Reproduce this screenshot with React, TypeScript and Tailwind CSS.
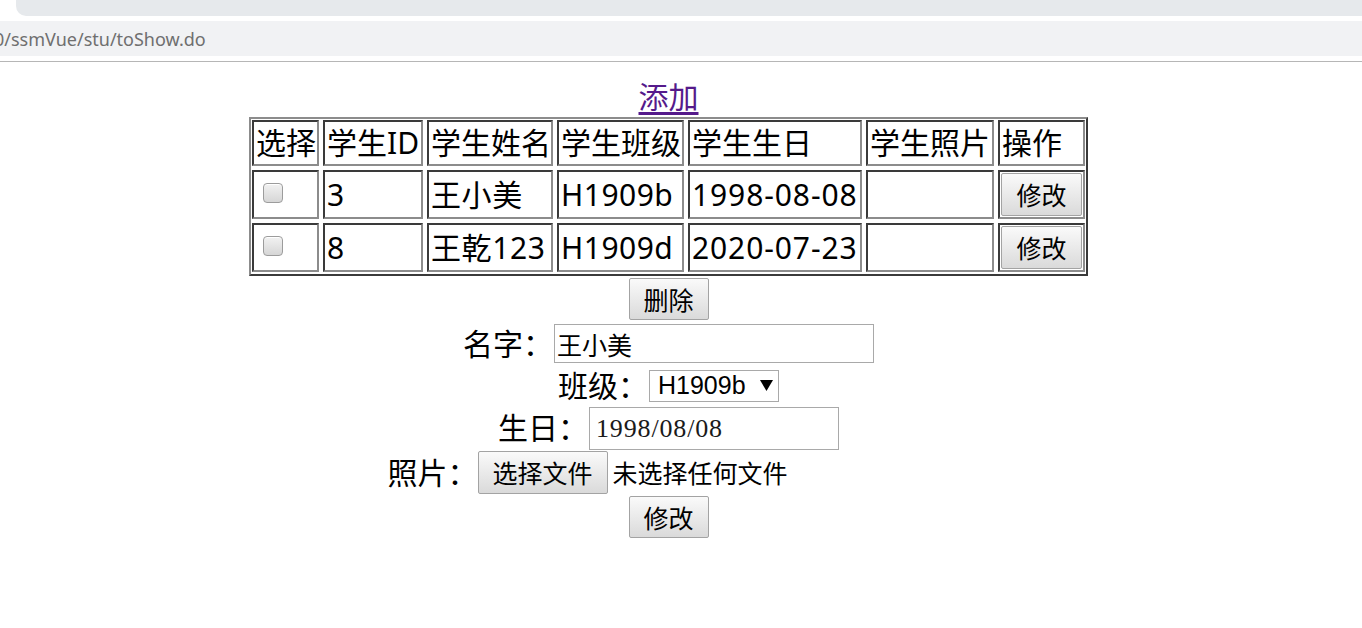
import React from "react";

const W = ["w-[63px]", "w-[96px]", "w-[122px]", "w-[123px]", "w-[170px]", "w-[124px]", "w-[83px]"];
const TD =
  "p-0 border-2 border-t-[#3a3a3a] border-l-[#3a3a3a] border-r-[#8c8c8c] border-b-[#8c8c8c] align-middle";

function Btn({ children, className = "" }: { children: React.ReactNode; className?: string }) {
  return (
    <button
      type="button"
      className={
        "flex items-center justify-center border border-[#a3a3a3] rounded-[2px] bg-linear-to-b from-[#fafafa] to-[#dadada] text-[25px] text-black leading-none pt-[2px] " +
        className
      }
    >
      {children}
    </button>
  );
}

function Check() {
  return (
    <input
      type="checkbox"
      className="appearance-none w-[20px] h-[20px] rounded-[4px] border border-[#9c9c9c] bg-linear-to-b from-[#f2f2f2] to-[#d6d6d6] shadow-[inset_0_1px_0_#ffffff] block"
    />
  );
}

const header = ["选择", "学生ID", "学生姓名", "学生班级", "学生生日", "学生照片", "操作"];
const rows = [
  { id: "3", name: "王小美", cls: "H1909b", bd: "1998-08-08" },
  { id: "8", name: "王乾123", cls: "H1909d", bd: "2020-07-23" },
];

export default function App() {
  return (
    <div className="w-[1362px] h-[628px] bg-white overflow-hidden font-['Noto_Sans','Noto_Sans_CJK_SC',sans-serif] text-black">
      {/* browser chrome */}
      <div className="h-[16px] flex">
        <div className="w-[16px] bg-white" />
        <div className="flex-1 bg-[#e6e9ec] rounded-bl-[10px]" />
      </div>
      <div className="h-[5px] bg-white" />
      <div className="h-[35px] bg-[#f1f2f4] flex items-center overflow-hidden">
        <span className="ml-[-6px] text-[18px] leading-[24px] text-[#6f6f6f] whitespace-nowrap">
          0/ssmVue/stu/toShow.do
        </span>
      </div>
      <div className="h-[5px] bg-white" />
      <div className="h-[1px] bg-[#b6b6b6]" />

      {/* page */}
      <div className="w-[1337px] pt-[15px] flex flex-col items-center">
        <a href="#" className="block h-[40px] text-[30px] leading-[40px] text-[#551a8b] underline underline-offset-[4px]">
          添加
        </a>

        <div className="border-2 border-t-[#8c8c8c] border-l-[#8c8c8c] border-r-[#3a3a3a] border-b-[#3a3a3a]">
          <table className="mx-[-3px] mt-[-3px] mb-[-2px] border-separate border-spacing-[4px] text-[30px] leading-[40px]">
            <tbody>
              <tr>
                {header.map((h, i) => (
                  <td key={h} className={TD}>
                    <div className={W[i] + " h-[42px] flex items-center px-[2px] whitespace-nowrap"}>{h}</div>
                  </td>
                ))}
              </tr>
              {rows.map((r) => (
                <tr key={r.id}>
                  <td className={TD}>
                    <div className={W[0] + " h-[45px] flex items-center pl-[9px] pb-[3px]"}>
                      <Check />
                    </div>
                  </td>
                  <td className={TD}>
                    <div className={W[1] + " h-[45px] flex items-center px-[2px]"}>{r.id}</div>
                  </td>
                  <td className={TD}>
                    <div className={W[2] + " h-[45px] flex items-center px-[2px] whitespace-nowrap tracking-[0.6px]"}>
                      {r.name}
                    </div>
                  </td>
                  <td className={TD}>
                    <div className={W[3] + " h-[45px] flex items-center px-[2px] tracking-[0.5px]"}>{r.cls}</div>
                  </td>
                  <td className={TD}>
                    <div className={W[4] + " h-[45px] flex items-center px-[2px] whitespace-nowrap tracking-[0.9px]"}>
                      {r.bd}
                    </div>
                  </td>
                  <td className={TD}>
                    <div className={W[5] + " h-[45px]"} />
                  </td>
                  <td className={TD}>
                    <div className={W[6] + " h-[45px] flex items-center pl-[1px]"}>
                      <Btn className="w-[81px] h-[43px]">修改</Btn>
                    </div>
                  </td>
                </tr>
              ))}
            </tbody>
          </table>
        </div>

        {/* delete */}
        <div className="h-[46px] flex items-center justify-center">
          <Btn className="w-[80px] h-[42px]">删除</Btn>
        </div>

        {/* name */}
        <div className="h-[43px] flex items-center justify-center">
          <span className="w-[90px] text-[30px] leading-[40px]">名字：</span>
          <input
            readOnly
            value="王小美"
            className="ml-[1px] w-[320px] h-[39px] border border-[#a9a9a9] px-[2px] text-[25px] text-black outline-none"
          />
        </div>

        {/* class */}
        <div className="h-[41px] flex items-center justify-center">
          <span className="w-[90px] text-[30px] leading-[40px]">班级：</span>
          <div className="ml-[1px] w-[130px] h-[32px] border border-[#a9a9a9] flex items-center pl-[8px] font-['Liberation_Sans',Arial,sans-serif] text-[25px] leading-none">
            <span>H1909b</span>
            <svg className="ml-[14px]" width="13" height="11" viewBox="0 0 13 11">
              <path d="M0 0 H13 L6.5 11 Z" fill="#000" />
            </svg>
          </div>
        </div>

        {/* birthday */}
        <div className="h-[44px] flex items-center justify-center">
          <span className="w-[90px] text-[30px] leading-[40px]">生日：</span>
          <div className="ml-[1px] w-[250px] h-[43px] border border-[#a9a9a9] flex items-center pl-[6px] font-['Liberation_Serif','Times_New_Roman',serif] text-[26px] tracking-[0.85px] text-[#1a1a1a]">
            1998/08/08
          </div>
        </div>

        {/* photo */}
        <div className="h-[45px] flex items-center justify-center">
          <span className="w-[90px] text-[30px] leading-[40px]">照片：</span>
          <div className="w-[472px] flex items-center">
            <Btn className="w-[130px] h-[43px]">选择文件</Btn>
            <span className="ml-[5px] text-[25px] leading-[34px] whitespace-nowrap">未选择任何文件</span>
          </div>
        </div>

        {/* submit */}
        <div className="h-[44px] flex items-center justify-center">
          <Btn className="w-[80px] h-[42px]">修改</Btn>
        </div>
      </div>
    </div>
  );
}
